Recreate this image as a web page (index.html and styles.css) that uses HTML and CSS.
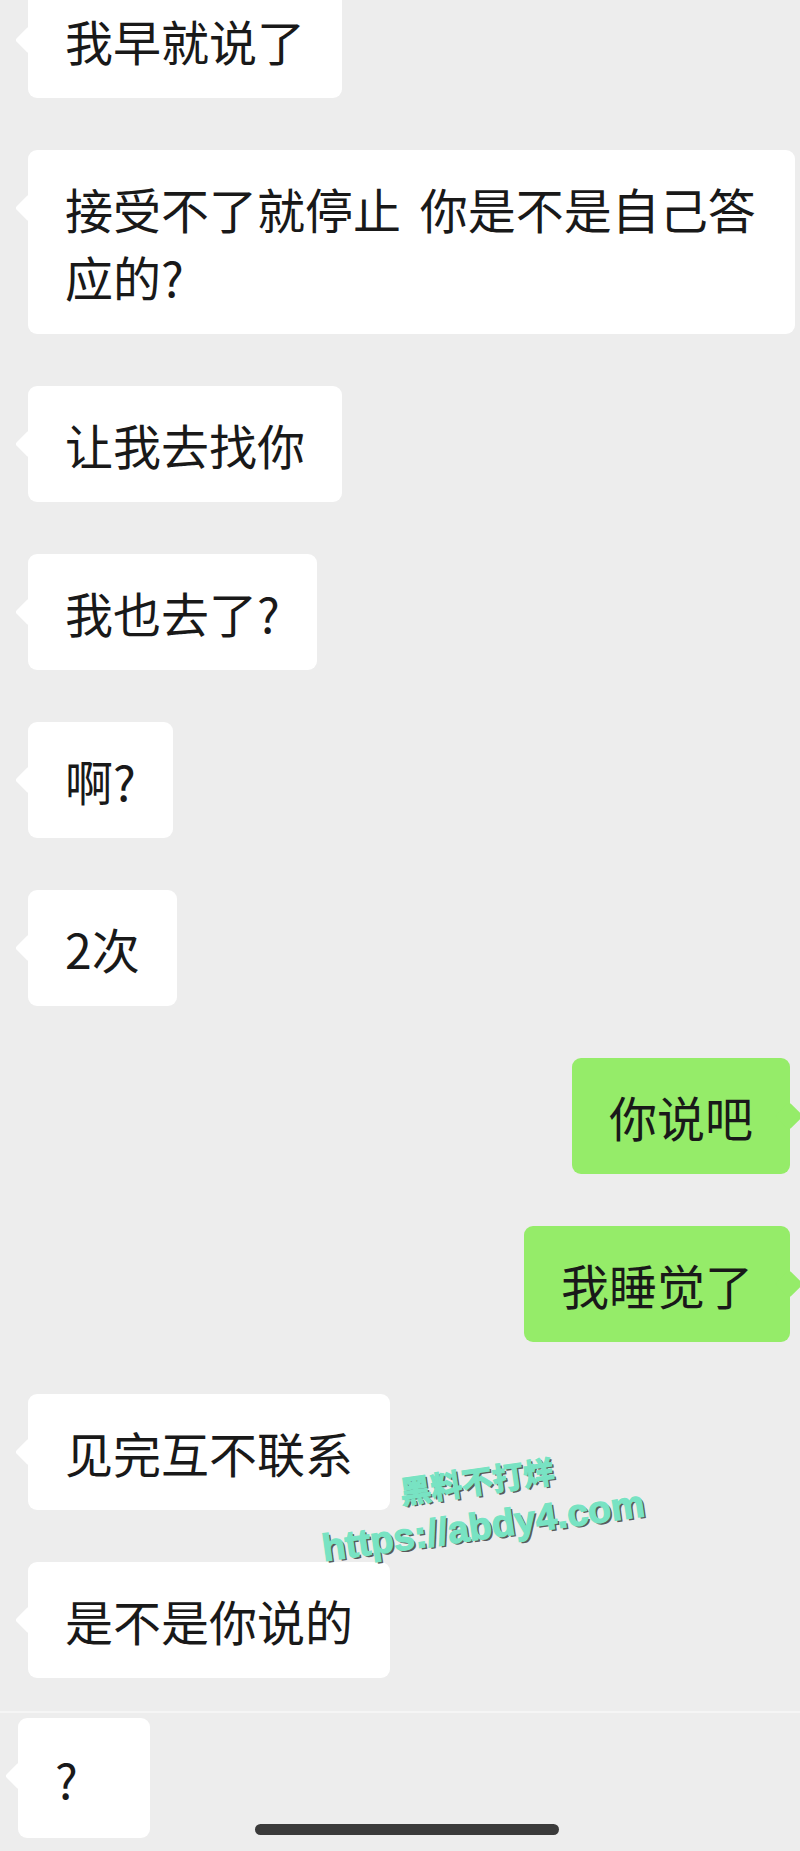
FILE: index.html
```html
<!DOCTYPE html>
<html lang="zh-CN">
<head>
  <meta charset="UTF-8" />
  <meta name="viewport" content="width=device-width, initial-scale=1.0"/>
  <title>聊天记录</title>
  <link rel="stylesheet" href="styles.css">
</head>
<body>
  <div class="screen">
    <div class="chat">
      <div class="msg msg-in"><div class="bubble">我早就说了</div></div>
      <div class="msg msg-in"><div class="bubble">接受不了就停止 你是不是自己答应的?</div></div>
      <div class="msg msg-in"><div class="bubble">让我去找你</div></div>
      <div class="msg msg-in"><div class="bubble">我也去了?</div></div>
      <div class="msg msg-in"><div class="bubble">啊?</div></div>
      <div class="msg msg-in"><div class="bubble">2次</div></div>
      <div class="msg msg-out"><div class="bubble">你说吧</div></div>
      <div class="msg msg-out"><div class="bubble">我睡觉了</div></div>
      <div class="msg msg-in"><div class="bubble">见完互不联系</div></div>
      <div class="msg msg-in"><div class="bubble">是不是你说的</div></div>
    </div>

    <div class="chat chat-next">
      <div class="msg msg-in"><div class="bubble bubble-min">?</div></div>
    </div>

    <div class="watermark">
      <div class="wm-name">黑料不打烊</div>
      <div class="wm-url">https://abdy4.com</div>
    </div>
    <div class="home-bar"></div>
  </div>
</body>
</html>
```

FILE: styles.css
```css
* { box-sizing: border-box; }
body {
  margin: 0;
  padding: 0;
  background: #ededed;
  font-family: "Noto Sans CJK SC", "Noto Sans", sans-serif;
  color: #191919;
}
.screen {
  position: relative;
  width: 800px;
  height: 1851px;
  overflow: hidden;
  background: #ededed;
}
.chat {
  display: flex;
  flex-direction: column;
  gap: 52px;
  padding: 0 5px 0 28px;
  margin-top: -18px;
}
.msg {
  display: flex;
}
.msg-out {
  justify-content: flex-end;
  padding-right: 5px;
}
.bubble {
  position: relative;
  max-width: 767px;
  padding: 24px 37px;
  font-size: 48px;
  line-height: 68px;
  word-spacing: 8px;
  border-radius: 9px;
  background: #fff;
}
.bubble::before {
  content: "";
  position: absolute;
  top: 48px;
  width: 20px;
  height: 20px;
  background: inherit;
  border-radius: 3px;
  transform: rotate(45deg);
}
.msg-in .bubble::before {
  left: -9px;
}
.msg-out .bubble {
  background: #95ec69;
}
.msg-out .bubble::before {
  right: -9px;
}
.chat-next {
  margin-top: 33px;
  padding-top: 5px;
  padding-left: 18px;
  border-top: 2px solid #f5f5f5;
}
.bubble-min {
  min-width: 132px;
  padding-top: 26px;
  padding-bottom: 26px;
}
.watermark {
  position: absolute;
  left: 300px;
  top: 1457px;
  width: 360px;
  text-align: center;
  font-weight: 700;
  color: #78e3c3;
  -webkit-text-stroke: 1.3px #78e3c3;
  text-shadow: 2px 2px 0 #5a5a5a, -1px -1px 0 #f4f4f4;
  transform: rotate(-8deg);
}
.wm-name {
  font-family: "Noto Sans CJK SC", sans-serif;
  font-size: 31px;
  line-height: 46px;
}
.wm-url {
  font-family: "Liberation Sans", Arial, sans-serif;
  font-size: 38px;
  line-height: 46px;
}
.home-bar {
  position: absolute;
  left: 255px;
  bottom: 16px;
  width: 304px;
  height: 11px;
  border-radius: 6px;
  background: #3a3a3a;
}
```
